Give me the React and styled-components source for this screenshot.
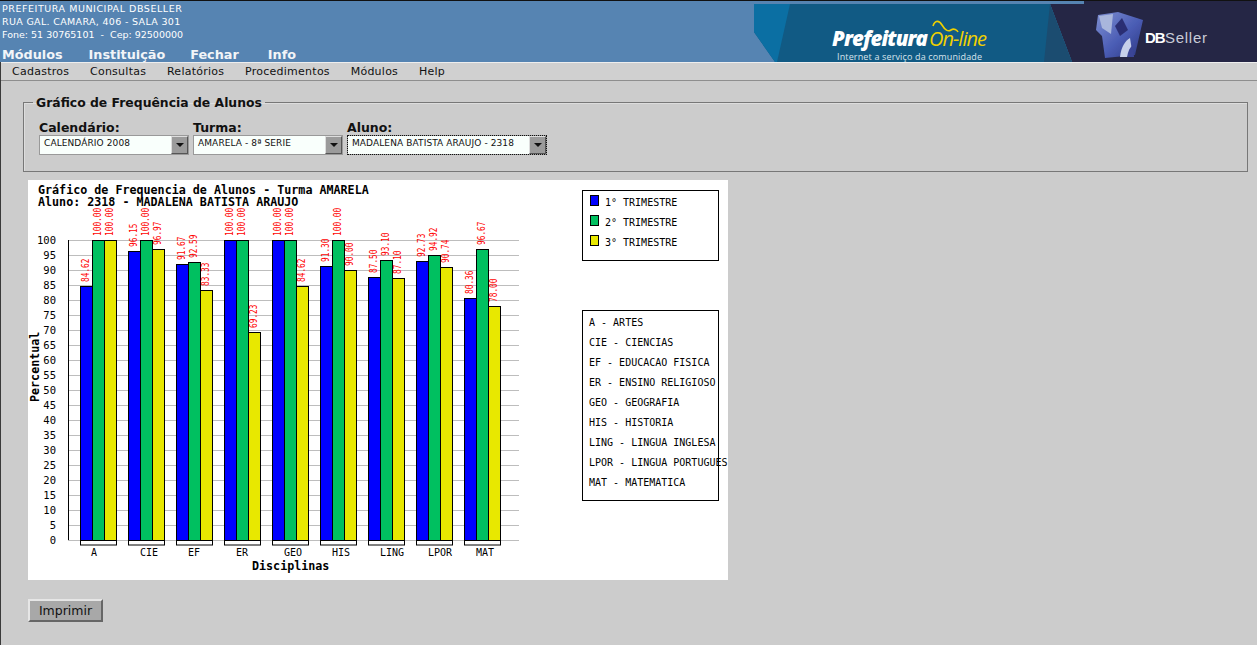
import React from 'react';
import styled, { createGlobalStyle } from 'styled-components';

const GlobalStyle = createGlobalStyle`
    html, body {
        margin: 0;
        padding: 0;
        background: #cccccc;
        font-family: "DejaVu Sans", sans-serif;
        overflow: hidden;
    }
`;

const Page = styled.div`
    height: 645px;
    box-sizing: border-box;
    border-left: 1px solid #3a3a3a;
    background: #cccccc;
`;

const Header = styled.header`
    display: flex;
    justify-content: space-between;
    height: 62px;
    box-sizing: border-box;
    border-top: 1px solid #111;
    margin-left: -1px;
    background: #5684b2;
`;

const HeaderInfo = styled.div`
    display: flex;
    flex-direction: column;
    padding: 1px 0 0 2px;
    color: #fff;
`;

const InfoLine = styled.div`
    font-size: 9.5px;
    line-height: 13px;
    letter-spacing: ${(p) => p.$spacing || 0}px;
    white-space: nowrap;
`;

const TopMenu = styled.nav`
    display: flex;
    gap: 25px;
    margin-top: 6px;
    font-size: 12.8px;
    font-weight: bold;
    line-height: 15px;
    color: #f2f5f8;
    span:nth-child(2) {
        margin-left: 1px;
    }
    span:last-child {
        margin-left: 4px;
    }
`;

const Toolbar = styled.nav`
    display: flex;
    gap: 20.8px;
    height: 17px;
    padding-left: 11px;
    background: #d0d0d0;
    border-top: 1px solid #eee;
    border-bottom: 1px solid #8e8e8e;
    font-size: 11px;
    letter-spacing: 0.25px;
    line-height: 17px;
    color: #111;
`;

const Filters = styled.fieldset`
    margin: 14px 9px 0 22px;
    padding: 10px 0 0 15px;
    height: 77px;
    box-sizing: border-box;
    border: 1px solid #777;
    box-shadow: inset 1px 1px 0 #ddd;
`;

const FiltersTitle = styled.legend`
    margin-left: -6px;
    padding: 0 3px;
    font-size: 12.4px;
    font-weight: bold;
    line-height: 15px;
    color: #111;
`;

const FilterRow = styled.div`
    display: flex;
    gap: 4px;
`;

const FilterField = styled.div`
    display: flex;
    flex-direction: column;
    width: ${(p) => p.$width}px;
`;

const FilterLabel = styled.label`
    font-size: 12.5px;
    font-weight: bold;
    line-height: 15px;
    color: #111;
`;

const SelectBox = styled.div`
    display: flex;
    height: 20px;
    box-sizing: border-box;
    background: #f9fffc;
    border: 1px solid #999;
    outline: ${(p) => (p.$focused ? '1px dotted #111' : 'none')};
    outline-offset: -1px;
`;

const SelectValue = styled.span`
    flex: 1;
    padding: 1px 0 0 4px;
    font-size: 9px;
    letter-spacing: 0.1px;
    line-height: 13px;
    color: #111;
    white-space: nowrap;
`;

const SelectArrow = styled.span`
    display: flex;
    align-items: center;
    justify-content: center;
    width: 15px;
    background: #9b9b9b;
    border-style: solid;
    border-width: 1px;
    border-color: #ddd #555 #555 #ddd;
    &::after {
        content: '';
        border-style: solid;
        border-width: 4px 4px 0;
        border-color: #111 transparent transparent;
    }
`;

const ChartPanel = styled.div`
    width: 700px;
    height: 400px;
    margin: 8px 0 0 27px;
    background: #fff;
`;

const PrintButton = styled.button`
    display: block;
    width: 75px;
    height: 23px;
    margin: 19px 0 0 27px;
    padding: 0;
    background: #a8a8a8;
    border-style: solid;
    border-width: 2px;
    border-color: #e6e6e6 #666 #666 #e6e6e6;
    font-family: "DejaVu Sans", sans-serif;
    font-size: 12.5px;
    color: #111;
`;

const COLORS = ['#0000ff', '#00c060', '#e8e800'];
const TRIMESTRES = ['1° TRIMESTRE', '2° TRIMESTRE', '3° TRIMESTRE'];
const DISCIPLINAS = [
    { code: 'A', name: 'ARTES', values: [84.62, 100, 100] },
    { code: 'CIE', name: 'CIENCIAS', values: [96.15, 100, 96.97] },
    { code: 'EF', name: 'EDUCACAO FISICA', values: [91.67, 92.59, 83.33] },
    { code: 'ER', name: 'ENSINO RELIGIOSO', values: [100, 100, 69.23] },
    { code: 'GEO', name: 'GEOGRAFIA', values: [100, 100, 84.62] },
    { code: 'HIS', name: 'HISTORIA', values: [91.3, 100, 90] },
    { code: 'LING', name: 'LINGUA INGLESA', values: [87.5, 93.1, 87.1] },
    { code: 'LPOR', name: 'LINGUA PORTUGUES', values: [92.73, 94.92, 90.74] },
    { code: 'MAT', name: 'MATEMATICA', values: [80.36, 96.67, 78] },
];
const TICKS = Array.from({ length: 21 }, (_, i) => i * 5);
const MONO = '"DejaVu Sans Mono", "Liberation Mono", monospace';

const toY = (value) => 360 - value * 3;

const Banner = () => (
    <svg width="503" height="61" viewBox="754 1 503 61">
        <defs>
            <linearGradient id="dbFace" x1="0" y1="0" x2="1" y2="1">
                <stop offset="0" stopColor="#7f90d2" />
                <stop offset="0.55" stopColor="#4a5cb4" />
                <stop offset="1" stopColor="#2c3680" />
            </linearGradient>
            <filter id="soft" x="-10%" y="-10%" width="120%" height="120%">
                <feGaussianBlur stdDeviation="0.7" />
            </filter>
        </defs>
        <rect x="1084" y="1" width="173" height="61" fill="#252645" />
        <polygon points="1050,4 1084,4 1084,62 1072,62" fill="#252645" />
        <polygon points="754,4 1050,4 1072,62 775,62 754,32" fill="#115a84" />
        <polygon points="754,4 790,4 777,62 775,62 754,32" fill="#0b6fa3" />
        <polygon points="1050,4 1072,62 1044,62" fill="#1b4c70" />
        <text x="832" y="46" fontFamily='"Open Sans", sans-serif' fontSize="20.5" fontWeight="800" fontStyle="italic" fill="#fff" textLength="96">
            Prefeitura
        </text>
        <text x="929" y="46" fontFamily='"Open Sans", sans-serif' fontSize="20" fontStyle="italic" fill="#f0d000" textLength="58">
            On-line
        </text>
        <path d="M933 26c2-6 6-6 9-1s6 7 9 5 6 0 7 2" fill="none" stroke="#f0d000" strokeWidth="1.6" />
        <text x="837" y="60" fontFamily='"Open Sans", sans-serif' fontSize="9" fill="#d8e4ec" textLength="145">
            Internet a serviço da comunidade
        </text>
        <g filter="url(#soft)">
            <path d="M1098 15l20-3 25 8-8 35-30 3-3-22-6-6z" fill="url(#dbFace)" />
            <path d="M1099 16l14-2-2 20-9-6z" fill="#a9b6dc" />
            <path d="M1115 26l7-8 6 12-8 6z" fill="#2b2f73" />
            <path d="M1120 57c1-10 5-16 10-19l3 19z" fill="#c7d0ea" />
            <path d="M1127 57c1-6 3-10 6-12l1 12z" fill="#3b4596" />
        </g>
        <text x="1145" y="43" fontFamily='"Liberation Sans", sans-serif' fontSize="15" fontWeight="bold" fill="#fff" letterSpacing="-1">DB</text>
        <text x="1165" y="43" fontFamily='"Liberation Sans", sans-serif' fontSize="15" fill="#c9ccd8" textLength="42">Seller</text>
    </svg>
);

const Chart = () => (
    <svg width="700" height="400" viewBox="0 0 700 400" fontFamily={MONO}>
        <g fontSize="11.7" fontWeight="bold" fill="#000">
            <text x="10" y="14">Gráfico de Frequencia de Alunos - Turma AMARELA</text>
            <text x="10" y="26">Aluno: 2318 - MADALENA BATISTA ARAUJO</text>
        </g>
        {TICKS.map((tick) => (
            <g key={tick}>
                <line x1="40" x2="491" y1={toY(tick) + 0.5} y2={toY(tick) + 0.5} stroke="#bdbdbd" />
                <text x="28" y={toY(tick) + 4} fontSize="10.5" textAnchor="end" fill="#000">{tick}</text>
            </g>
        ))}
        <line x1="40.5" x2="40.5" y1="60" y2="360" stroke="#000" />
        {DISCIPLINAS.map((disciplina, i) => {
            const groupX = 52 + i * 48;
            return (
                <g key={disciplina.code}>
                    <rect x={groupX + 0.5} y="360.5" width="36" height="4.5" fill="#fff" stroke="#000" />
                    {disciplina.values.map((value, j) => {
                        const x = groupX + j * 12;
                        const top = Math.floor(toY(value));
                        const label = value.toFixed(2);
                        return (
                            <g key={j}>
                                <rect x={x + 0.5} y={top + 0.5} width="12" height={360 - top} fill={COLORS[j]} stroke="#000" />
                                <text
                                    transform={`translate(${x + 9} ${top - 4}) rotate(-90)`}
                                    fontSize="9.6"
                                    fill="#ff0000"
                                    textLength={label.length * 4.7}
                                    lengthAdjust="spacingAndGlyphs"
                                >
                                    {label}
                                </text>
                            </g>
                        );
                    })}
                    <text x={i === 0 ? 63 : groupX + 12} y="376" fontSize="10" fill="#000">{disciplina.code}</text>
                </g>
            );
        })}
        <text x="224" y="390" fontSize="11.7" fontWeight="bold" fill="#000">Disciplinas</text>
        <text transform="translate(11 222) rotate(-90)" fontSize="11.7" fontWeight="bold" fill="#000">Percentual</text>

        <rect x="554.5" y="10.5" width="136" height="70" fill="#fff" stroke="#000" />
        {TRIMESTRES.map((label, i) => (
            <g key={label}>
                <rect x="562.5" y={15.5 + i * 20} width="8" height="10" fill={COLORS[i]} stroke="#000" />
                <text x="577" y={26 + i * 20} fontSize="10" fill="#000">{label}</text>
            </g>
        ))}

        <rect x="554.5" y="130.5" width="136" height="190" fill="#fff" stroke="#000" />
        {DISCIPLINAS.map((disciplina, i) => (
            <text key={disciplina.code} x="561" y={146 + i * 20} fontSize="10" fill="#000">
                {disciplina.code} - {disciplina.name}
            </text>
        ))}
    </svg>
);

const App = () => (
    <Page>
        <GlobalStyle />
        <Header>
            <HeaderInfo>
                <InfoLine $spacing={0.55}>PREFEITURA MUNICIPAL DBSELLER</InfoLine>
                <InfoLine $spacing={0.33}>RUA GAL. CAMARA, 406 - SALA 301</InfoLine>
                <InfoLine>Fone: 51 30765101&nbsp; -&nbsp; Cep: 92500000</InfoLine>
                <TopMenu>
                    <span>Módulos</span>
                    <span>Instituição</span>
                    <span>Fechar</span>
                    <span>Info</span>
                </TopMenu>
            </HeaderInfo>
            <Banner />
        </Header>
        <Toolbar>
            <span>Cadastros</span>
            <span>Consultas</span>
            <span>Relatórios</span>
            <span>Procedimentos</span>
            <span>Módulos</span>
            <span>Help</span>
        </Toolbar>
        <Filters>
            <FiltersTitle>Gráfico de Frequência de Alunos</FiltersTitle>
            <FilterRow>
                <FilterField $width={150}>
                    <FilterLabel>Calendário:</FilterLabel>
                    <SelectBox>
                        <SelectValue>CALENDÁRIO 2008</SelectValue>
                        <SelectArrow />
                    </SelectBox>
                </FilterField>
                <FilterField $width={150}>
                    <FilterLabel>Turma:</FilterLabel>
                    <SelectBox>
                        <SelectValue>AMARELA - 8ª SERIE</SelectValue>
                        <SelectArrow />
                    </SelectBox>
                </FilterField>
                <FilterField $width={200}>
                    <FilterLabel>Aluno:</FilterLabel>
                    <SelectBox $focused>
                        <SelectValue>MADALENA BATISTA ARAUJO - 2318</SelectValue>
                        <SelectArrow />
                    </SelectBox>
                </FilterField>
            </FilterRow>
        </Filters>
        <ChartPanel>
            <Chart />
        </ChartPanel>
        <PrintButton>Imprimir</PrintButton>
    </Page>
);

export default App;
